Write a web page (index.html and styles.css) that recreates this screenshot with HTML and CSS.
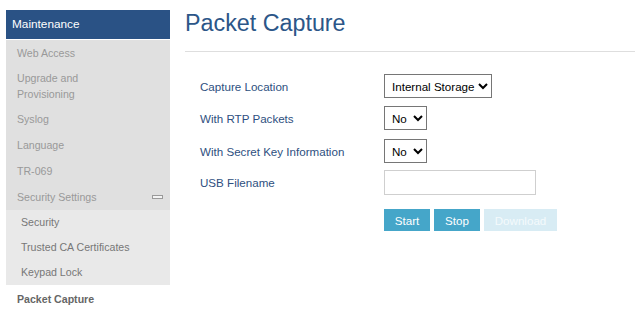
FILE: index.html
```html
<!DOCTYPE html>
<html>
<head>
<meta charset="utf-8">
<link rel="stylesheet" href="styles.css">
</head>
<body>
<div class="page">
  <nav class="sidebar">
    <div class="side-head">Maintenance</div>
    <ul class="menu">
      <li class="item">Web Access</li>
      <li class="item two">Upgrade and<br>Provisioning</li>
      <li class="item">Syslog</li>
      <li class="item">Language</li>
      <li class="item">TR-069</li>
      <li class="item group">Security Settings<span class="minus"></span></li>
    </ul>
    <ul class="submenu">
      <li class="subitem">Security</li>
      <li class="subitem">Trusted CA Certificates</li>
      <li class="subitem">Keypad Lock</li>
    </ul>
    <div class="active">Packet Capture</div>
  </nav>
  <main class="main">
    <h1 class="title">Packet Capture</h1>
    <div class="rule"></div>
    <form class="form">
      <div class="row r1">
        <label class="label">Capture Location</label>
        <select class="sel wide"><option>Internal Storage</option></select>
      </div>
      <div class="row r2">
        <label class="label">With RTP Packets</label>
        <select class="sel narrow"><option>No</option></select>
      </div>
      <div class="row r3">
        <label class="label">With Secret Key Information</label>
        <select class="sel narrow"><option>No</option></select>
      </div>
      <div class="row r4">
        <label class="label">USB Filename</label>
        <input class="txt" type="text">
      </div>
      <div class="row r5">
        <span class="label"></span>
        <div class="buttons">
          <button type="button" class="btn start">Start</button>
          <button type="button" class="btn stop">Stop</button>
          <button type="button" class="btn dl">Download</button>
        </div>
      </div>
    </form>
  </main>
</div>
</body>
</html>
```

FILE: styles.css
```css
* { box-sizing: border-box; }
html, body { margin: 0; padding: 0; background: #fff; }
body { font-family: "Liberation Sans", Arial, sans-serif; width: 635px; height: 316px; overflow: hidden; }

.page { display: flex; align-items: flex-start; }

.sidebar { width: 164px; margin: 10px 0 0 6px; flex: none; }
.side-head {
  height: 30px;
  background: #2a5285;
  color: #fff;
  font-size: 11.8px;
  line-height: 29px;
  padding-left: 6px;
  border-bottom: 1px solid #fff;
}
.menu, .submenu { list-style: none; margin: 0; padding: 0; }
.menu { background: #e0e0e0; }
.item {
  position: relative;
  font-size: 10.6px;
  line-height: 16px;
  padding: 5px 0 5px 11px;
  color: #999;
}
.item.two { padding-top: 4px; padding-bottom: 4px; }
.minus {
  position: absolute;
  right: 7px;
  top: 11px;
  width: 11px;
  height: 4px;
  border: 1px solid #9a9a9a;
  background: #f4f4f4;
}
.submenu { background: #e9e9e9; }
.subitem {
  font-size: 10.6px;
  line-height: 15px;
  padding: 5px 0 5px 15px;
  color: #777;
}
.active {
  font-size: 10.6px;
  font-weight: bold;
  line-height: 16px;
  padding: 6px 0 5px 11px;
  color: #666;
}

.main { flex: 1; margin-left: 15px; }
.title {
  margin: 10px 0 0 0;
  font-size: 23.3px;
  line-height: 26px;
  font-weight: normal;
  color: #2c5688;
}
.rule { height: 1px; background: #dedede; margin-top: 15px; }

.form { display: flex; flex-direction: column; gap: 8px; padding: 22px 0 0 15px; }
.row { display: flex; align-items: center; }
.r3 { margin-top: 1px; }
.r4 { margin-top: -1px; }
.r5 { margin-top: 6px; }
.label { width: 184px; flex: none; font-size: 11.6px; color: #2e4f80; }

.sel {
  height: 24px;
  font-family: "Liberation Sans", Arial, sans-serif;
  font-size: 11.6px;
  color: #000;
  background: #fff;
  border: 1px solid #767676;
  border-radius: 0;
  padding: 0 0 0 3px;
  margin: 0;
}
.wide { width: 108px; }
.narrow { width: 43px; }
.txt {
  width: 152px;
  height: 25px;
  border: 1px solid #cfcfcf;
  margin: 0;
  padding: 0 4px;
  font-size: 12px;
}
.buttons { display: flex; gap: 4px; }
.btn {
  height: 22px;
  border: none;
  margin: 0;
  padding: 0;
  font-family: "Liberation Sans", Arial, sans-serif;
  font-size: 11.6px;
  color: #fff;
  background: #45a6c9;
}
.start, .stop { width: 46px; }
.dl { width: 73px; background: #d8ecf4; color: #f4fafc; }
```
